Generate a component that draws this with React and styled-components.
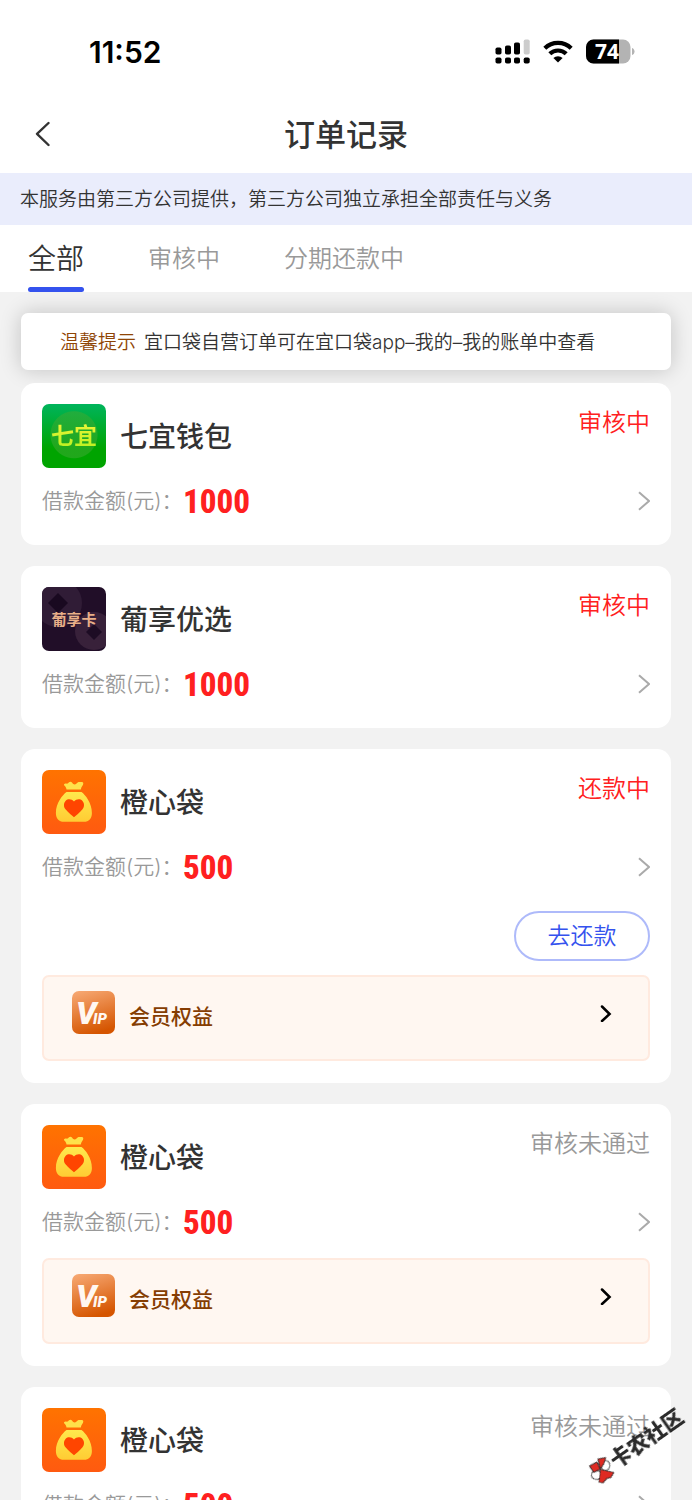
import React, { useState } from "react";
import styled, { createGlobalStyle } from "styled-components";

const GlobalStyle = createGlobalStyle`
  * {
    box-sizing: border-box;
  }
  body {
    margin: 0;
    background: #f2f2f2;
    color: #333;
    font-family: Inter, "Noto Sans CJK SC", sans-serif;
  }
  button {
    font-family: inherit;
    background: none;
    border: 0;
    padding: 0;
    cursor: pointer;
  }
`;

const Page = styled.div`
  height: 100vh;
  display: flex;
  flex-direction: column;
  overflow: hidden;
`;

const StatusBar = styled.div`
  display: flex;
  align-items: center;
  justify-content: space-between;
  flex: none;
  height: 96px;
  padding: 7px 57px 0 89px;
  background: #fff;
`;

const Clock = styled.span`
  color: #000;
  font-size: 30px;
  font-weight: 600;
  line-height: 36px;
`;

const StatusIcons = styled.div`
  display: flex;
  align-items: center;
  gap: 13px;
`;

const NavBar = styled.header`
  display: grid;
  grid-template-columns: 50px 1fr 50px;
  align-items: center;
  flex: none;
  height: 77px;
  padding: 0 20px;
  background: #fff;
`;

const BackButton = styled.button`
  display: flex;
  padding-left: 12px;
`;

const Title = styled.h1`
  margin: 0;
  font-size: 31px;
  font-weight: 500;
  line-height: 44px;
  text-align: center;
`;

const Notice = styled.p`
  flex: none;
  margin: 0;
  padding: 2px 20px 0;
  background: #eaedfc;
  font-size: 19px;
  font-weight: 350;
  line-height: 50px;
`;

const Tabs = styled.nav`
  display: flex;
  flex: none;
  gap: 64px;
  height: 67px;
  padding: 0 28px;
  background: #fff;
`;

const Tab = styled.button`
  display: flex;
  flex-direction: column;
  justify-content: space-between;
  color: ${(props) => (props.$active ? "#333" : "#999")};
  font-size: ${(props) => (props.$active ? "28px" : "24px")};
  font-weight: 350;
  line-height: 68px;

  &::after {
    content: "";
    width: 100%;
    height: 5px;
    margin-top: -6px;
    border-radius: 3px;
    background: ${(props) => (props.$active ? "#3452ee" : "transparent")};
  }
`;

const List = styled.main`
  display: flex;
  flex: 1;
  flex-direction: column;
  gap: 21px;
  min-height: 0;
  padding: 21px;
  overflow-y: auto;
  scrollbar-width: none;
`;

const Tip = styled.p`
  display: flex;
  flex: none;
  gap: 8px;
  margin: 0 0 -8px;
  padding: 2px 39px 0;
  border-radius: 7px;
  background: #fff;
  box-shadow: 0 0 21px rgba(0, 0, 0, 0.2);
  font-size: 19px;
  font-weight: 350;
  line-height: 55px;
`;

const TipLabel = styled.span`
  color: #8f4505;
`;

const Card = styled.article`
  flex: none;
  padding: 21px 21px 22px;
  border-radius: 14px;
  background: #fff;
  position: relative;
`;

const CardHead = styled.div`
  display: flex;
  align-items: center;
  gap: 14px;
`;

const Logo = styled.div`
  display: flex;
  align-items: center;
  justify-content: center;
  flex: none;
  width: 64px;
  height: 64px;
  border-radius: 7px;
  background: ${(props) => props.$background};
  overflow: hidden;
`;

const LogoText = styled.span`
  background: ${(props) => props.$fill};
  background-clip: text;
  color: transparent;
  font-size: 23px;
  font-weight: 700;
  line-height: 32px;
`;

const Name = styled.h2`
  flex: 1;
  margin: 0;
  padding-top: 2px;
  font-size: 28px;
  font-weight: 500;
  line-height: 40px;
`;

const Status = styled.span`
  align-self: flex-start;
  color: ${(props) => (props.$muted ? "#999" : "#ff2020")};
  font-size: 24px;
  font-weight: 350;
  line-height: 38px;
`;

const AmountRow = styled.div`
  display: flex;
  align-items: center;
  height: 44px;
  margin-top: 11px;
`;

const AmountLabel = styled.span`
  width: 141px;
  color: #999;
  font-size: 21px;
  font-weight: 350;
  line-height: 32px;
  white-space: nowrap;
`;

const Amount = styled.strong`
  flex: 1;
  padding-top: 2px;
  color: #ff2020;
  font-family: "Roboto Condensed", "Liberation Sans Narrow", Roboto, sans-serif;
  font-size: 33px;
  font-weight: 800;
  line-height: 44px;
`;

const Actions = styled.div`
  display: flex;
  justify-content: flex-end;
  margin-top: 22px;
`;

const RepayButton = styled.button`
  width: 136px;
  height: 50px;
  border: 2px solid #aebafa;
  border-radius: 25px;
  color: #3452ee;
  font-size: 23px;
  font-weight: 350;
  line-height: 44px;
`;

const VipRow = styled.button`
  display: flex;
  align-items: center;
  gap: 14px;
  width: 100%;
  margin-top: 14px;
  padding: 14px 36px 25px 28px;
  border: 2px solid #ffeadf;
  border-radius: 7px;
  background: #fff7f1;
  text-align: left;
`;

const VipLabel = styled.span`
  flex: 1;
  padding-top: 8px;
  color: #853d02;
  font-size: 21px;
  font-weight: 500;
  line-height: 32px;
`;

const Watermark = styled.div`
  position: fixed;
  right: 1px;
  bottom: 40px;
  display: flex;
  align-items: center;
  color: #2b2b2b;
  font-size: 21px;
  font-weight: 900;
  line-height: 28px;
  transform: rotate(-35deg);
  pointer-events: none;

  svg {
    transform: rotate(35deg);
  }
`;

const SignalIcon = () => (
  <svg width="35" height="25" viewBox="0 0 35 25">
    <rect x="0.5" y="8.5" width="6" height="7" rx="1.8" />
    <rect x="10" y="6.5" width="6" height="9" rx="1.8" />
    <rect x="19" y="3.5" width="6" height="12" rx="1.8" />
    <rect x="28.7" y="0.5" width="6" height="15" rx="1.8" fill="#ccc" />
    {[0.5, 10, 19, 28.7].map((x) => (
      <rect key={x} x={x} y="18.5" width="6" height="6" rx="1.8" />
    ))}
  </svg>
);

const WifiIcon = () => (
  <svg width="30" height="23" viewBox="0 0 30 23">
    <g fill="none" stroke="#000" strokeWidth="4.2">
      <path d="M1.8 8.3a19 19 0 0 1 26.4 0" />
      <path d="M6.8 13.8a11.8 11.8 0 0 1 16.4 0" />
    </g>
    <path d="M15 22.500l-4.600-4.500a6.600 6.600 0 0 1 9.200 0z" />
  </svg>
);

const BatteryIcon = () => (
  <svg width="49" height="25" viewBox="0 0 49 25">
    <rect x="0" y="0.5" width="44.5" height="24" rx="7.5" fill="#b3b3b3" />
    <path d="M7.5 .5H33v24H7.5A7.5 7.5 0 0 1 0 17V8A7.5 7.5 0 0 1 7.5.5z" />
    <path d="M46 9c3.4 1 3.4 6 0 7z" fill="#b3b3b3" />
    <text
      x="9"
      y="20"
      fill="#fff"
      fontFamily="Open Sans, sans-serif"
      fontSize="21"
      fontWeight="700"
    >
      74
    </text>
  </svg>
);

const BackIcon = () => (
  <svg width="18" height="28" viewBox="0 0 18 28">
    <path
      d="M16.500 2L5 12.800L16.500 24"
      fill="none"
      stroke="#333"
      strokeWidth="2.4"
      strokeLinecap="round"
      strokeLinejoin="round"
    />
  </svg>
);

const ArrowIcon = () => (
  <svg width="12" height="20" viewBox="0 0 12 20">
    <path d="M1 1.3L11 10L1 18.7" fill="none" stroke="#aaa" strokeWidth="2" />
  </svg>
);

const VipArrowIcon = () => (
  <svg width="12" height="18" viewBox="0 0 12 18">
    <path
      d="M2 2.5L9.6 10L2 17"
      fill="none"
      stroke="#000"
      strokeWidth="2.5"
      strokeLinecap="round"
    />
  </svg>
);

const VipIcon = () => (
  <svg width="43" height="43" viewBox="0 0 43 43">
    <defs>
      <linearGradient id="vip" x1="0.2" y1="0" x2="0.5" y2="1">
        <stop offset="0" stopColor="#f6a670" />
        <stop offset="1" stopColor="#d55500" />
      </linearGradient>
    </defs>
    <rect width="43" height="43" rx="7" fill="url(#vip)" />
    <text
      x="4"
      y="33"
      fill="#fff7f1"
      fontFamily="Roboto, sans-serif"
      fontSize="32"
      fontStyle="italic"
      fontWeight="900"
    >
      V
      <tspan x="21" fontSize="15">
        IP
      </tspan>
    </text>
  </svg>
);

const MoneyBag = () => (
  <svg width="64" height="64" viewBox="0 0 64 64">
    <defs>
      <linearGradient id="bag" x1="0" y1="0" x2="0" y2="1">
        <stop offset="0" stopColor="#ffe94d" />
        <stop offset="1" stopColor="#ffcc33" />
      </linearGradient>
    </defs>
    <path
      d="M24.500 19.500C24.300 17.500 23.500 16.500 22.300 15.500C21.300 14.400 22.600 13.200 24 13.500C25.500 14 26.200 13.200 27 12.300C28 11.300 29.400 11.600 30.200 12.800C31.200 14.500 33 15 34.300 13.700C35.500 12 37 11.600 38.300 12.100C39.600 12 41.300 11.900 41.300 13.400C41.200 15.400 39 16.500 38.800 19.500z"
      fill="#ffe14a"
    />
    <path
      d="M24.500 22h15c4 3 10.400 11 10.400 21c0 5.500-3 8.800-8 8.800h-20c-5 0-8-3.300-8-8.800c0-10 6.600-18 10.600-21z"
      fill="url(#bag)"
    />
    <path
      d="M32 47.300c-2-1.500-5.500-4.500-8.500-8c-2.200-2.700-2-6.300.2-8.600c2.400-2.300 6-1.900 8.300.9c2.300-2.800 5.900-3.200 8.300-.9c2.200 2.300 2.400 5.900.2 8.600c-3 3.500-6.500 6.500-8.500 8z"
      fill="#ff4500"
    />
  </svg>
);

const CoinCard = () => (
  <svg width="64" height="64" viewBox="0 0 64 64">
    <circle cx="16" cy="16" r="24" fill="#301c36" />
    <path d="M16 6l10 10l-10 10L6 16z" fill="#190920" />
    <circle cx="52" cy="44" r="19" fill="#38213a" />
    <path d="M52 37l8 8l-8 8l-8-8z" fill="#1d0c24" />
    <text
      x="32"
      y="38"
      fill="#e8af88"
      fontSize="15"
      fontWeight="700"
      textAnchor="middle"
    >
      葡享卡
    </text>
  </svg>
);

const ScissorsMark = () => (
  <svg width="26" height="27" viewBox="0 0 26 27">
    <g stroke="#222" strokeWidth="0.8">
      <ellipse cx="16.500" cy="8.500" rx="4.500" ry="5" fill="#fff" />
      <ellipse cx="7.500" cy="18" rx="5" ry="4.500" fill="#fff" />
      <path d="M.5 9L8 5l3.500 7L5 15.500z" fill="#df2a22" />
      <path d="M9 2l8-1.500l-2 6L11.500 12z" fill="#df2a22" />
      <path d="M11.500 12.500L25 15.500L22 20.500l-4 1L14 26l-4-1l1-6z" fill="#df2a22" />
    </g>
  </svg>
);

const logos = {
  qiyi: (
    <Logo $background="radial-gradient(circle at 50% 48%, rgba(60, 170, 50, 0.55) 0 23px, transparent 24px), linear-gradient(#00b45c, #00a400 70%)">
      <LogoText $fill="linear-gradient(#f2f53c, #b4f01c)">七宜</LogoText>
    </Logo>
  ),
  puxiang: (
    <Logo $background="#210e28">
      <CoinCard />
    </Logo>
  ),
  chengxin: (
    <Logo $background="linear-gradient(#ff7300, #ff5a10)">
      <MoneyBag />
    </Logo>
  ),
};

const tabs = ["全部", "审核中", "分期还款中"];

const orders = [
  { id: 1, logo: "qiyi", name: "七宜钱包", amount: 1000, status: "审核中" },
  { id: 2, logo: "puxiang", name: "葡享优选", amount: 1000, status: "审核中" },
  {
    id: 3,
    logo: "chengxin",
    name: "橙心袋",
    amount: 500,
    status: "还款中",
    repay: true,
    vip: true,
  },
  {
    id: 4,
    logo: "chengxin",
    name: "橙心袋",
    amount: 500,
    status: "审核未通过",
    rejected: true,
    vip: true,
  },
  {
    id: 5,
    logo: "chengxin",
    name: "橙心袋",
    amount: 500,
    status: "审核未通过",
    rejected: true,
    vip: true,
  },
];

const Order = ({ order }) => (
  <Card>
    <CardHead>
      {logos[order.logo]}
      <Name>{order.name}</Name>
      <Status $muted={order.rejected}>{order.status}</Status>
    </CardHead>
    <AmountRow>
      <AmountLabel>借款金额(元)：</AmountLabel>
      <Amount>{order.amount}</Amount>
      <ArrowIcon />
    </AmountRow>
    {order.repay && (
      <Actions>
        <RepayButton>去还款</RepayButton>
      </Actions>
    )}
    {order.vip && (
      <VipRow>
        <VipIcon />
        <VipLabel>会员权益</VipLabel>
        <VipArrowIcon />
      </VipRow>
    )}
  </Card>
);

const App = () => {
  const [active, setActive] = useState(tabs[0]);

  return (
    <Page lang="zh-CN">
      <GlobalStyle />
      <StatusBar>
        <Clock>11:52</Clock>
        <StatusIcons>
          <SignalIcon />
          <WifiIcon />
          <BatteryIcon />
        </StatusIcons>
      </StatusBar>
      <NavBar>
        <BackButton aria-label="返回">
          <BackIcon />
        </BackButton>
        <Title>订单记录</Title>
      </NavBar>
      <Notice>本服务由第三方公司提供，第三方公司独立承担全部责任与义务</Notice>
      <Tabs>
        {tabs.map((tab) => (
          <Tab key={tab} $active={tab === active} onClick={() => setActive(tab)}>
            {tab}
          </Tab>
        ))}
      </Tabs>
      <List>
        <Tip>
          <TipLabel>温馨提示</TipLabel>
          <span>宜口袋自营订单可在宜口袋app–我的–我的账单中查看</span>
        </Tip>
        {orders.map((order) => (
          <Order key={order.id} order={order} />
        ))}
      </List>
      <Watermark>
        <ScissorsMark />
        卡农社区
      </Watermark>
    </Page>
  );
};

export default App;
